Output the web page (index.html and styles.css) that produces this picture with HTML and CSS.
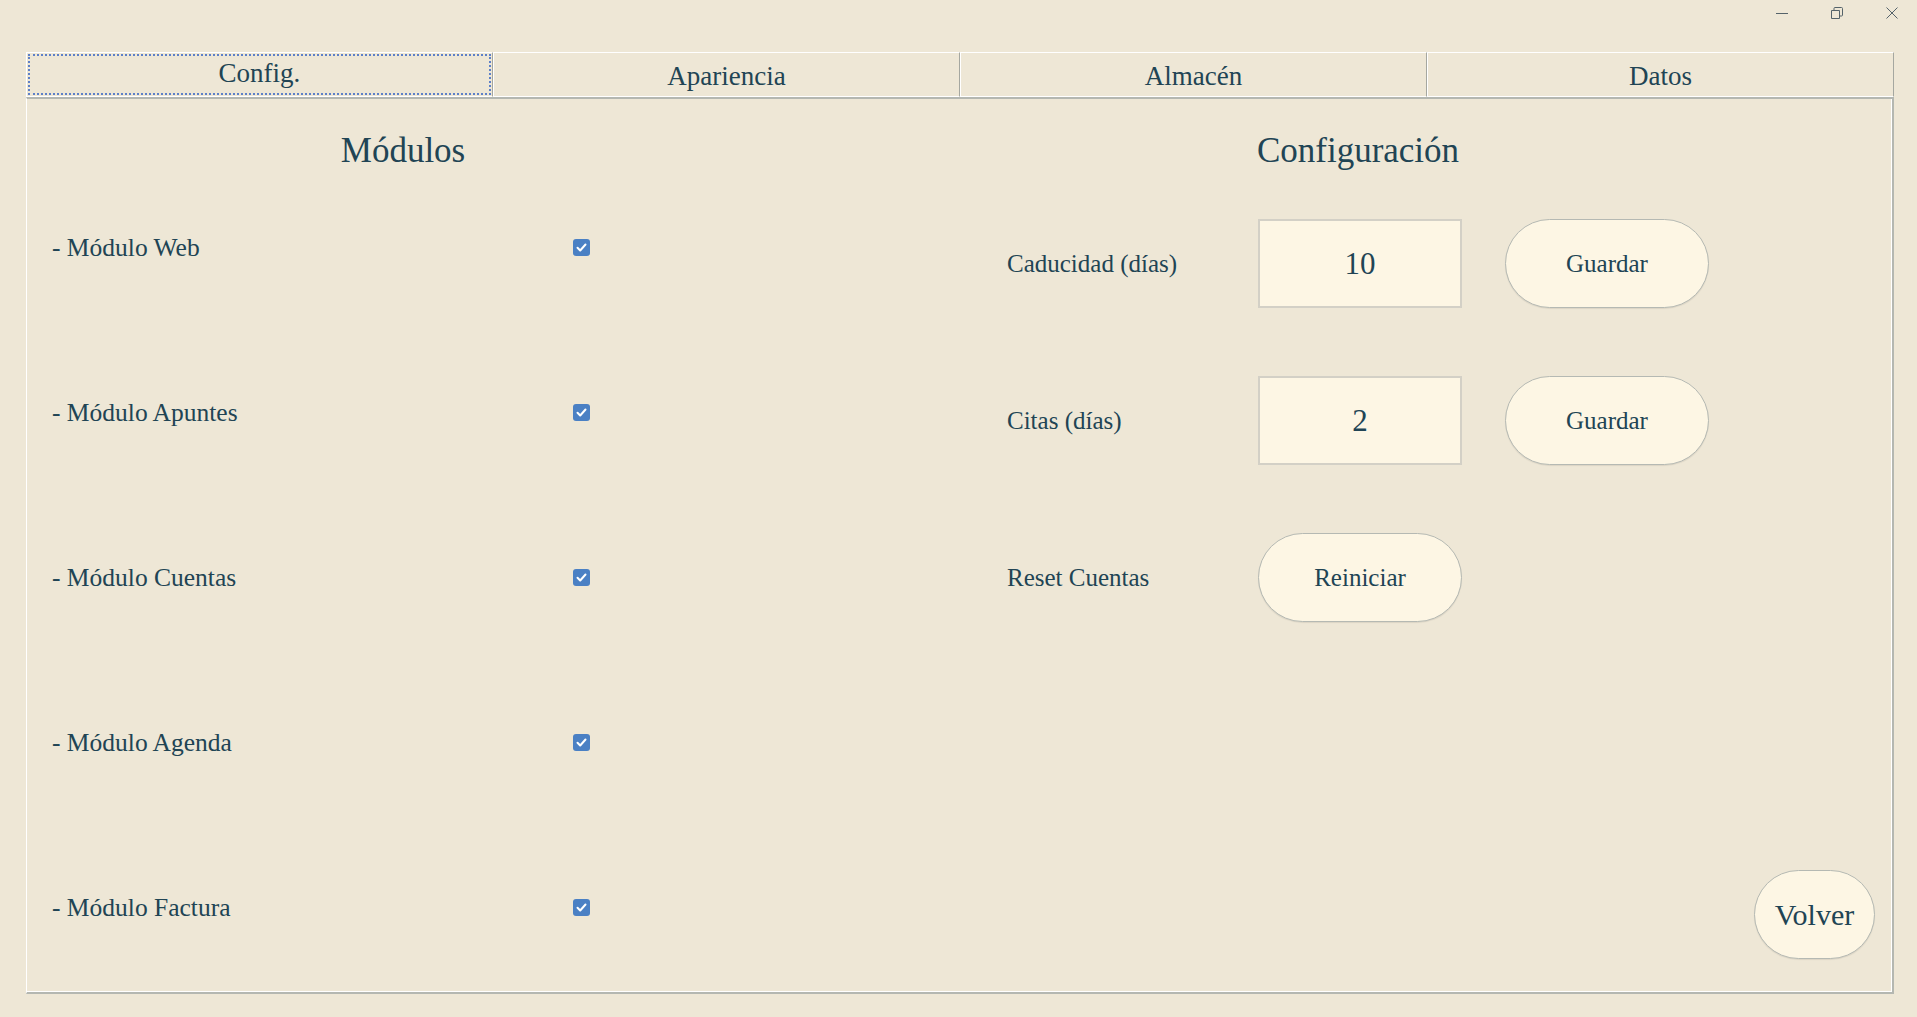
FILE: index.html
```html
<!DOCTYPE html>
<html lang="es">
<head>
  <meta charset="UTF-8">
  <meta name="viewport" content="width=device-width, initial-scale=1.0">
  <title>Configuración</title>
  <link rel="stylesheet" href="styles.css">
</head>
<body>

<!-- Controles de ventana -->
<div class="titlebar">
  <svg class="win-icon" viewBox="0 0 12 12"><path d="M0 6.5h12"/></svg>
  <svg class="win-icon" viewBox="0 0 12 12"><path d="M0.5 3.5h8v8h-8z"/><path d="M3 3.5v-2a1 1 0 0 1 1-1h6.5a1 1 0 0 1 1 1v6.5a1 1 0 0 1-1 1h-2"/></svg>
  <svg class="win-icon" viewBox="0 0 12 12"><path d="M0.5 0.5l11 11M11.5 0.5l-11 11"/></svg>
</div>

<div class="notebook">
  <div class="tabs">
    <div class="tab selected">Config.</div>
    <div class="tab">Apariencia</div>
    <div class="tab">Almacén</div>
    <div class="tab">Datos</div>
  </div>

  <div class="panel">
    <!-- Columna de módulos -->
    <section class="modulos">
      <h2>Módulos</h2>
      <ul class="module-list">
        <li><span>- Módulo Web</span><span class="check"><svg viewBox="0 0 17 17"><path d="M4.5 8.8l2.7 2.7 5.3-6"/></svg></span></li>
        <li><span>- Módulo Apuntes</span><span class="check"><svg viewBox="0 0 17 17"><path d="M4.5 8.8l2.7 2.7 5.3-6"/></svg></span></li>
        <li><span>- Módulo Cuentas</span><span class="check"><svg viewBox="0 0 17 17"><path d="M4.5 8.8l2.7 2.7 5.3-6"/></svg></span></li>
        <li><span>- Módulo Agenda</span><span class="check"><svg viewBox="0 0 17 17"><path d="M4.5 8.8l2.7 2.7 5.3-6"/></svg></span></li>
        <li><span>- Módulo Factura</span><span class="check"><svg viewBox="0 0 17 17"><path d="M4.5 8.8l2.7 2.7 5.3-6"/></svg></span></li>
      </ul>
    </section>

    <!-- Columna de configuración -->
    <section class="config">
      <h2>Configuración</h2>
      <div class="config-grid">
        <label for="caducidad">Caducidad (días)</label>
        <input type="text" id="caducidad" class="campo" value="10">
        <button class="btn">Guardar</button>

        <label for="citas">Citas (días)</label>
        <input type="text" id="citas" class="campo" value="2">
        <button class="btn">Guardar</button>

        <label>Reset Cuentas</label>
        <button class="btn">Reiniciar</button>
      </div>
    </section>

    <div class="actions">
      <button class="btn btn-volver">Volver</button>
    </div>
  </div>
</div>

</body>
</html>
```

FILE: styles.css
```css
* {
  box-sizing: border-box;
}

body {
  margin: 0;
  height: 1017px;
  overflow: hidden;
  background-color: #eee7d6;
  font-family: 'Liberation Serif', 'Times New Roman', serif;
  color: #214454;
}

.titlebar {
  height: 52px;
  display: flex;
  justify-content: flex-end;
  align-items: flex-start;
  gap: 43px;
  padding: 7px 19px 0 0;
}

.win-icon {
  width: 12px;
  height: 12px;
  fill: none;
  stroke: #55636a;
  stroke-width: 1;
}

.notebook {
  margin: 0 23px 0 26px;
}

.tabs {
  display: flex;
  height: 45px;
}

.tab {
  flex: 1;
  border-top: 1px solid #fff;
  border-left: 1px solid #fff;
  border-right: 1px solid #a5a7a0;
  border-bottom: 1px solid #fff;
  font-size: 27px;
  line-height: 43px;
  padding-top: 2px;
  text-align: center;
}

.tab.selected {
  padding-top: 0;
  line-height: 41px;
  outline: 2px dotted #5d80c8;
  outline-offset: -4px;
}

.panel {
  display: flex;
  height: 897px;
  border-top: 2px solid #b4b7b1;
  border-left: 1px solid #fff;
  border-right: 2px solid #b4b7b1;
  border-bottom: 2px solid #b4b7b1;
  box-shadow: inset -1px -1px 0 #fff;
}

h2 {
  margin: 37px 0 0;
  height: 30px;
  line-height: 30px;
  font-size: 35px;
  font-weight: normal;
  text-align: center;
}

.modulos {
  margin-left: 25px;
  width: 702px;
}

.module-list {
  list-style: none;
  margin: -1px 0 0;
  padding: 0;
}

.module-list li {
  height: 165px;
  display: grid;
  grid-template-columns: 521px 17px;
  align-items: center;
  font-size: 25.5px;
}

.check {
  width: 17px;
  height: 17px;
  border-radius: 3px;
  background-color: #4a80c4;
  display: block;
}

.check svg {
  display: block;
  width: 17px;
  height: 17px;
  fill: none;
  stroke: #fff;
  stroke-width: 2;
  stroke-linecap: round;
  stroke-linejoin: round;
}

.config {
  margin-left: 253px;
  width: 702px;
}

.config-grid {
  margin-top: 53px;
  display: grid;
  grid-template-columns: 208px 204px 204px;
  grid-auto-rows: 89px;
  column-gap: 43px;
  row-gap: 68px;
  align-items: center;
}

.config-grid label {
  font-size: 25px;
}

.campo {
  width: 204px;
  height: 89px;
  border: 2px solid #d3d0c6;
  background-color: #fdf6e4;
  font-family: inherit;
  font-size: 31px;
  color: inherit;
  text-align: center;
  padding: 0;
  outline: none;
}

.btn {
  width: 204px;
  height: 89px;
  border: 1px solid #b5b9b3;
  border-radius: 45px;
  background-color: #fdf6e4;
  box-shadow: 0 1px 1px rgba(0, 0, 0, 0.08);
  font-family: inherit;
  font-size: 25px;
  color: inherit;
  cursor: pointer;
  padding: 0;
}

.actions {
  flex: 1;
  display: flex;
  justify-content: flex-end;
  align-items: flex-end;
  padding: 0 17px 33px 0;
}

.btn-volver {
  width: 121px;
  font-size: 30px;
}
```
